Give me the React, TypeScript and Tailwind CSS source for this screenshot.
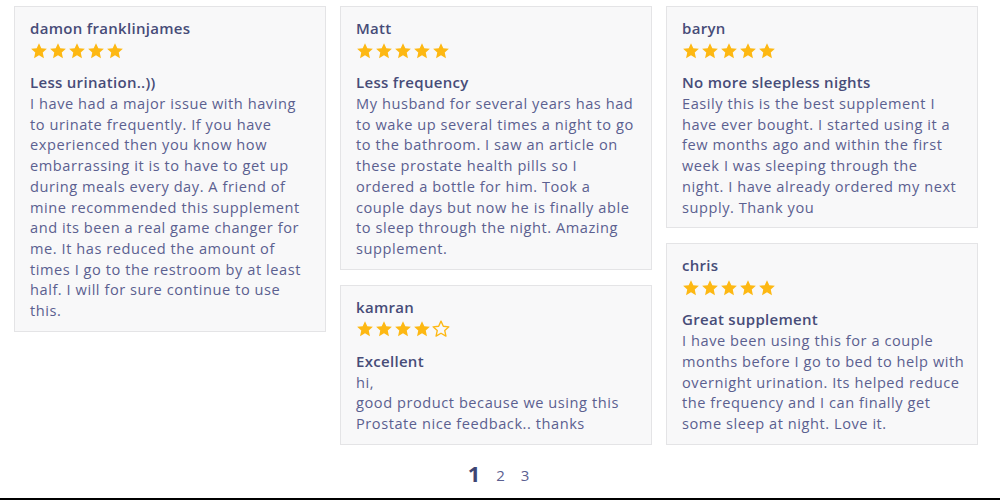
type Review = {
  name: string;
  rating: number;
  title: string;
  lines: string[];
};

const columns: Review[][] = [
  [
    {
      name: "damon franklinjames",
      rating: 5,
      title: "Less urination..))",
      lines: [
        "I have had a major issue with having",
        "to urinate frequently. If you have",
        "experienced then you know how",
        "embarrassing it is to have to get up",
        "during meals every day. A friend of",
        "mine recommended this supplement",
        "and its been a real game changer for",
        "me. It has reduced the amount of",
        "times I go to the restroom by at least",
        "half. I will for sure continue to use",
        "this.",
      ],
    },
  ],
  [
    {
      name: "Matt",
      rating: 5,
      title: "Less frequency",
      lines: [
        "My husband for several years has had",
        "to wake up several times a night to go",
        "to the bathroom. I saw an article on",
        "these prostate health pills so I",
        "ordered a bottle for him. Took a",
        "couple days but now he is finally able",
        "to sleep through the night. Amazing",
        "supplement.",
      ],
    },
    {
      name: "kamran",
      rating: 4,
      title: "Excellent",
      lines: ["hi,", "good product because we using this", "Prostate nice feedback.. thanks"],
    },
  ],
  [
    {
      name: "baryn",
      rating: 5,
      title: "No more sleepless nights",
      lines: [
        "Easily this is the best supplement I",
        "have ever bought. I started using it a",
        "few months ago and within the first",
        "week I was sleeping through the",
        "night. I have already ordered my next",
        "supply. Thank you",
      ],
    },
    {
      name: "chris",
      rating: 5,
      title: "Great supplement",
      lines: [
        "I have been using this for a couple",
        "months before I go to bed to help with",
        "overnight urination. Its helped reduce",
        "the frequency and I can finally get",
        "some sleep at night. Love it.",
      ],
    },
  ],
];

const STAR = "M12 1.5l3.1 6.8 7.4.8-5.5 5 1.6 7.4L12 17.7l-6.6 3.8 1.6-7.4-5.5-5 7.4-.8z";

function Stars({ rating }: { rating: number }) {
  return (
    <div className="flex gap-[1px] h-[17px] items-center">
      {[0, 1, 2, 3, 4].map((i) => (
        <svg key={i} width="18" height="18" viewBox="0 0 24 24">
          {i < rating ? (
            <path d={STAR} fill="#fdb813" />
          ) : (
            <path d={STAR} fill="none" stroke="#fdb813" strokeWidth="1.8" strokeLinejoin="round" />
          )}
        </svg>
      ))}
    </div>
  );
}

function ReviewCard({ review }: { review: Review }) {
  return (
    <div className="bg-[#f8f8f9] border border-[#e4e4e6] pt-[11px] pb-[10px] pl-[15px] pr-[8px]">
      <div className="text-[15px] leading-[21px] font-semibold tracking-[0.3px] text-[#474c78]">{review.name}</div>
      <div className="mt-[3px]">
        <Stars rating={review.rating} />
      </div>
      <div className="mt-[13px] text-[15px] leading-[21px] font-semibold tracking-[0.3px] text-[#474c78]">{review.title}</div>
      <div className="text-[14.6px] leading-[20.7px] tracking-[0.55px] text-[#5b6090]">
        {review.lines.map((l, i) => (
          <div key={i} className="whitespace-nowrap">
            {l}
          </div>
        ))}
      </div>
    </div>
  );
}

export default function App() {
  return (
    <div className="w-[1000px] h-[500px] bg-white border-b-2 border-black flex flex-col font-['Open_Sans',sans-serif]">
      <div className="flex gap-[14px] pl-[14px] pt-[6px]">
        {columns.map((col, ci) => (
          <div key={ci} className="w-[312px] flex flex-col gap-[15px]">
            {col.map((r) => (
              <ReviewCard key={r.name} review={r} />
            ))}
          </div>
        ))}
      </div>
      <div className="flex justify-center items-end gap-[16px] mt-[16px] pr-[3px] text-[#5b6090]">
        <span className="text-[22px] font-bold text-[#3e4573] leading-[24px]">1</span>
        <span className="text-[15px] leading-[20px]">2</span>
        <span className="text-[15px] leading-[20px]">3</span>
      </div>
    </div>
  );
}
